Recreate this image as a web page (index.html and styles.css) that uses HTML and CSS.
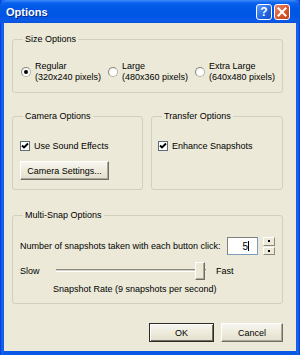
FILE: index.html
```
<!DOCTYPE html>
<html lang="en">
<head>
	<meta charset="UTF-8">
	<title>Options</title>
	<link rel="stylesheet" href="styles.css">
</head>
<body>
	<div class="window">
		<div class="titlebar">
			<span class="title">Options</span>
			<div class="tb-btns">
				<span class="tb-btn help">?</span>
				<span class="tb-btn close">
					<svg width="10" height="10" viewBox="0 0 10 10"><path d="M1.5 1.5 L8.5 8.5 M8.5 1.5 L1.5 8.5" stroke="#fff" stroke-width="2" stroke-linecap="square"/></svg>
				</span>
			</div>
		</div>
		<div class="client">
			<fieldset class="group size">
				<legend>Size Options</legend>
				<div class="radios">
					<label class="radio-item"><span class="radio on"></span><span>Regular<br>(320x240 pixels)</span></label>
					<label class="radio-item"><span class="radio"></span><span>Large<br>(480x360 pixels)</span></label>
					<label class="radio-item"><span class="radio"></span><span>Extra Large<br>(640x480 pixels)</span></label>
				</div>
			</fieldset>

			<div class="row2">
				<fieldset class="group camera">
					<legend>Camera Options</legend>
					<label class="check-item"><span class="check"><svg width="8" height="8" viewBox="0 0 8 8"><path d="M1 3.5 L3 5.5 L7 1.5" fill="none" stroke="#000" stroke-width="1.8"/></svg></span>Use Sound Effects</label>
					<button class="btn cam-btn">Camera Settings...</button>
				</fieldset>
				<fieldset class="group transfer">
					<legend>Transfer Options</legend>
					<label class="check-item"><span class="check"><svg width="8" height="8" viewBox="0 0 8 8"><path d="M1 3.5 L3 5.5 L7 1.5" fill="none" stroke="#000" stroke-width="1.8"/></svg></span>Enhance Snapshots</label>
				</fieldset>
			</div>

			<fieldset class="group multi">
				<legend>Multi-Snap Options</legend>
				<div class="num-row">
					<span class="num-label">Number of snapshots taken with each button click:</span>
					<span class="textbox">5<span class="caret"></span></span>
					<span class="spinner"><span class="spin up"></span><span class="spin down"></span></span>
				</div>
				<div class="slider-row">
					<span class="slow">Slow</span>
					<span class="slider"><span class="track"></span><span class="thumb"></span></span>
					<span class="fast">Fast</span>
				</div>
				<div class="rate">Snapshot Rate (9 snapshots per second)</div>
			</fieldset>

			<div class="buttons">
				<button class="btn default ok">OK</button>
				<button class="btn cancel">Cancel</button>
			</div>
		</div>
	</div>
</body>
</html>
```
FILE: styles.css
```
*{padding: 0;margin: 0;}
*,*:after,*:before{box-sizing:border-box;}
html,body{width: 300px;height: 355px;overflow: hidden;}
body{font-family: "Liberation Sans", Arial, sans-serif;font-size: 9px;color: #000;background: #0a46d4;}

.window{
	width: 300px;
	height: 355px;
	display: flex;
	flex-direction: column;
	background: linear-gradient(to right, #0831d9 0, #166aee 2px, #0a5ae6 4px, #0a5ae6 296px, #166aee 298px, #0831d9 300px);
	padding: 0 4px 4px;
}
.titlebar{
	height: 23px;
	margin: 0 -4px;
	display: flex;
	align-items: center;
	padding: 0 10px 0 6px;
	background: linear-gradient(to bottom, #3c8cf8 0, #0a61ed 3px, #0058e6 8px, #0055e5 16px, #0b5ae8 21px, #0a50d6 23px);
	border-radius: 6px 6px 0 0;
}
.title{
	color: #fff;
	font-weight: bold;
	font-size: 11px;
	text-shadow: 1px 1px 0 #0a2c8c;
}
.tb-btns{margin-left: auto;display: flex;gap: 2px;}
.tb-btn{
	width: 16px;
	height: 16px;
	border: 1px solid #fff;
	border-radius: 3px;
	display: flex;
	align-items: center;
	justify-content: center;
	color: #fff;
	font-weight: bold;
	font-size: 12px;
}
.help{background: linear-gradient(135deg, #5e9cfb, #2164e6 60%, #1a50c8);}
.close{background: linear-gradient(135deg, #e68b6c, #d8562f 55%, #c24416);}

.client{
	flex: 1;
	background: #ece9d8;
	padding: 11px 13px 0 8px;
	display: flex;
	flex-direction: column;
}

.group{
	border: 1px solid #d0d0bf;
	border-radius: 3px;
	min-width: 0;
	padding: 0 7px;
}
.group legend{
	line-height: 10px;
	padding: 0 2px;
	margin-left: 3px;
}

.size{height: 59px;}
.radios{
	display: grid;
	grid-template-columns: 87px 87px 87px;
	margin-top: 17px;
	margin-left: 1px;
}
.radio-item{display: flex;align-items: center;gap: 4px;line-height: 11px;}
.radio{
	width: 10px;
	height: 10px;
	border-radius: 50%;
	border: 1px solid #b8b6a8;
	border-top-color: #8c8a7c;
	border-left-color: #8c8a7c;
	background: radial-gradient(circle at 60% 60%, #fff 40%, #e8e6dc);
	flex: none;
	display: flex;
	align-items: center;
	justify-content: center;
}
.radio.on:after{
	content: "";
	width: 4px;
	height: 4px;
	border-radius: 50%;
	background: #000;
}

.row2{display: flex;gap: 8px;margin-top: 18px;}
.camera{width: 131px;height: 79px;}
.transfer{width: 132px;height: 79px;}
.check-item{display: flex;align-items: center;gap: 4px;margin-top: 19px;height: 11px;}
.check{
	width: 10px;
	height: 10px;
	border: 1px solid #5d6b76;
	background: #fff;
	display: flex;
	align-items: center;
	justify-content: center;
	flex: none;
}
.transfer .check-item{margin-left: -1px;}

.btn{
	font-family: inherit;
	font-size: 9px;
	background: linear-gradient(to bottom, #f7f6f0, #ece9d8 60%, #e2dfd0);
	border: 1px solid;
	border-color: #fff #716f64 #716f64 #fff;
	box-shadow: inset -1px -1px 0 #aca899;
	color: #000;
}
.cam-btn{width: 89px;height: 19px;margin-top: 10px;}

.multi{height: 94px;margin-top: 20px;}
.num-row{display: flex;align-items: center;margin-top: 17px;height: 18px;}
.num-label{width: 207px;}
.textbox{
	width: 31px;
	height: 18px;
	border: 1px solid;
	border-color: #7f9db9;
	border-top-color: #808080;
	border-left-color: #808080;
	background: #fff;
	display: flex;
	align-items: center;
	justify-content: flex-end;
	padding-right: 8px;
	font-size: 10px;
}
.caret{width: 1px;height: 10px;background: #000;margin-left: 0;}
.spinner{
	width: 12px;
	height: 18px;
	margin-left: 5px;
	display: flex;
	flex-direction: column;
	gap: 1px;
}
.spin{
	flex: 1;
	border: 1px solid;
	border-color: #fff #8c8a7c #8c8a7c #fff;
	background: #ece9d8;
	display: flex;
	align-items: center;
	justify-content: center;
}
.spin:after{content: "";width: 2px;height: 2px;background: #000;}

.slider-row{display: flex;align-items: center;margin-top: 7px;height: 18px;}
.slow{width: 36px;}
.slider{position: relative;width: 150px;height: 18px;}
.track{
	position: absolute;
	left: 0;
	right: 0;
	top: 7px;
	height: 3px;
	border-top: 1px solid #8c8a7c;
	border-bottom: 1px solid #fff;
	background: #d6d3c4;
}
.thumb{
	position: absolute;
	right: 1px;
	top: 0;
	width: 10px;
	height: 18px;
	background: #ece9d8;
	border: 1px solid;
	border-color: #fff #716f64 #716f64 #fff;
	box-shadow: inset -1px -1px 0 #aca899;
}
.fast{margin-left: 10px;}
.rate{margin-left: 33px;margin-top: 4px;}

.buttons{display: flex;justify-content: flex-end;gap: 7px;margin-top: 19px;}
.ok{width: 65px;height: 19px;}
.cancel{width: 62px;height: 19px;}
.btn.default{border-color: #2c2b26;box-shadow: inset 1px 1px 0 #fff, inset -1px -1px 0 #716f64;}
```
